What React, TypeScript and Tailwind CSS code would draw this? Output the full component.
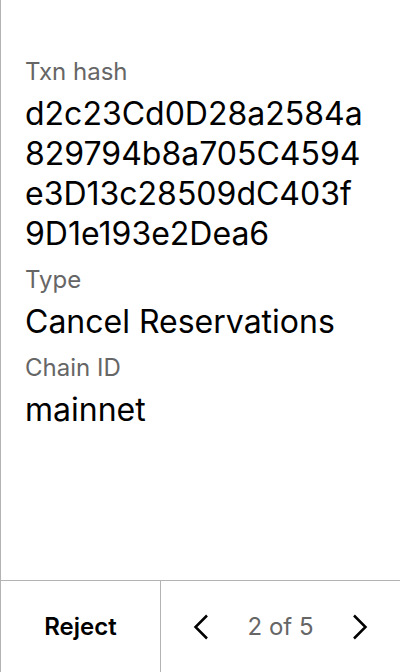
export default function App() {
  const fields = [
    { label: "Txn hash", value: "d2c23Cd0D28a2584a829794b8a705C4594e3D13c28509dC403f9D1e193e2Dea6" },
    { label: "Type", value: "Cancel Reservations" },
    { label: "Chain ID", value: "mainnet" },
  ];

  return (
    <div
      className="flex flex-col h-[672px] w-[400px] bg-white border-l border-[#b3b3b3] text-black"
      style={{ fontFamily: "Inter, 'Noto Sans', sans-serif" }}
    >
      {/* Details */}
      <div className="flex-1 flex flex-col gap-3 pl-6 pr-[31px] pt-[58px]">
        {fields.map((f) => (
          <div key={f.label} className="flex flex-col gap-2">
            <span className="text-[24px] leading-7 text-[#666666]">{f.label}</span>
            <span className="text-[32px] leading-10 break-all">{f.value}</span>
          </div>
        ))}
      </div>

      {/* Footer */}
      <div className="flex h-[92px] border-t border-[#b3b3b3]">
        <button className="w-[160px] border-r border-[#b3b3b3] text-[24px] font-semibold flex items-center justify-center">
          Reject
        </button>
        <div className="flex-1 flex items-center justify-between px-[32px]">
          <svg width="16" height="26" viewBox="0 0 16 26" fill="none">
            <path d="M14 1.5 2.5 13 14 24.5" stroke="black" strokeWidth="2.5" />
          </svg>
          <span className="text-[24px] text-[#666666]">2 of 5</span>
          <svg width="16" height="26" viewBox="0 0 16 26" fill="none">
            <path d="M2 1.5 13.5 13 2 24.5" stroke="black" strokeWidth="2.5" />
          </svg>
        </div>
      </div>
    </div>
  );
}
